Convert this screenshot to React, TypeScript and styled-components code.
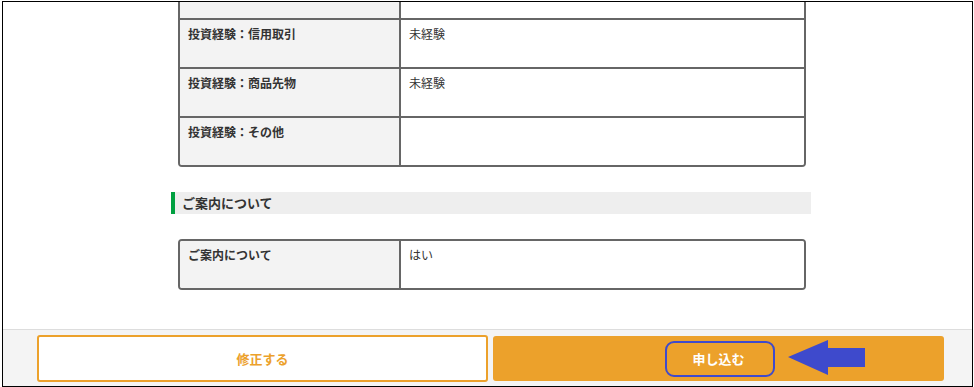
import styled, { createGlobalStyle } from 'styled-components';

const GlobalStyle = createGlobalStyle`
  body {
    margin: 0;
    background: #ffffff;
    font-family: "Noto Sans CJK JP", "Noto Sans", sans-serif;
    color: #333333;
  }
`;

type Row = { label: string; value: string };

// first row is scrolled mostly out of view, only its bottom edge shows
const experienceRows: Row[] = [
  { label: '', value: '' },
  { label: '投資経験：信用取引', value: '未経験' },
  { label: '投資経験：商品先物', value: '未経験' },
  { label: '投資経験：その他', value: '' },
];

const noticeRows: Row[] = [{ label: 'ご案内について', value: 'はい' }];

const DataTable = ({ rows }: { rows: Row[] }) => (
  <Table>
    {rows.map((r, i) => (
      <TableRow key={i}>
        <LabelCell>{r.label}</LabelCell>
        <ValueCell>{r.value}</ValueCell>
      </TableRow>
    ))}
  </Table>
);

const App = () => {
  return (
    <>
      <GlobalStyle />
      <Frame>
        <Content>
          <Inner>
            <DataTable rows={experienceRows} />
            <SectionHeading>ご案内について</SectionHeading>
            <DataTable rows={noticeRows} />
          </Inner>
        </Content>
        <Footer>
          <EditButton>修正する</EditButton>
          <SubmitButton>
            申し込む
            <Highlight />
            <Arrow width="78" height="36" viewBox="0 0 78 36">
              <polygon points="0,17 40,0 40,8 77,8 77,27 40,27 40,35" fill="#3e4acc" />
            </Arrow>
          </SubmitButton>
        </Footer>
      </Frame>
    </>
  );
};

export default App;

const Frame = styled.div`
  margin: 1px 0 0 2px;
  width: 969px;
  height: 384px;
  border: 1px solid #000000;
  display: flex;
  flex-direction: column;
  overflow: hidden;
`;

const Content = styled.div`
  height: 327px;
  overflow: hidden;
`;

const Inner = styled.div`
  margin-top: -33px;
  padding-left: 168px;
  width: 640px;
  display: flex;
  flex-direction: column;
`;

const Table = styled.div`
  margin-left: 7px;
  width: 624px;
  border: 2px solid #666666;
  border-radius: 4px;
  overflow: hidden;
`;

const TableRow = styled.div`
  display: flex;
  height: 47px;
  & + & {
    border-top: 2px solid #666666;
  }
`;

const LabelCell = styled.div`
  box-sizing: border-box;
  width: 221px;
  flex-shrink: 0;
  background: #f3f3f3;
  border-right: 2px solid #666666;
  padding: 5px 8px 0;
  font-size: 12px;
  font-weight: bold;
  line-height: 18px;
`;

const ValueCell = styled.div`
  flex: 1;
  padding: 5px 8px 0;
  font-size: 12px;
  line-height: 18px;
  background: #ffffff;
`;

const SectionHeading = styled.div`
  margin: 25px 0 25px;
  height: 22px;
  background: #eeeeee;
  border-left: 4px solid #00a040;
  padding-left: 7px;
  font-size: 13px;
  font-weight: bold;
  line-height: 22px;
`;

const Footer = styled.div`
  flex: 1;
  border-top: 1px solid #dddddd;
  background: #f4f4f4;
  display: flex;
  gap: 5px;
  padding: 5px 0 0 34px;
  align-items: flex-start;
`;

const ButtonBase = styled.div`
  flex: none;
  width: 451px;
  box-sizing: border-box;
  border-radius: 3px;
  display: flex;
  align-items: center;
  justify-content: center;
  font-size: 13px;
  font-weight: bold;
`;

const EditButton = styled(ButtonBase)`
  height: 47px;
  background: #ffffff;
  border: 2px solid #eca12b;
  color: #eca12b;
`;

const SubmitButton = styled(ButtonBase)`
  position: relative;
  margin-top: 1px;
  height: 45px;
  background: #eca12b;
  color: #ffffff;
`;

const Highlight = styled.div`
  position: absolute;
  left: 172px;
  top: 5px;
  width: 110px;
  height: 36px;
  box-sizing: border-box;
  border: 2px solid #3e4acc;
  border-radius: 9px;
`;

const Arrow = styled.svg`
  position: absolute;
  left: 295px;
  top: 4px;
`;
